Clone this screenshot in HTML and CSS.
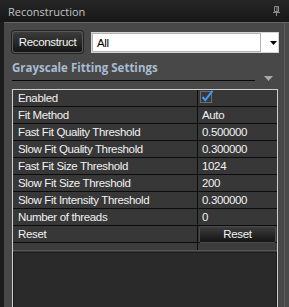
FILE: index.html
```html
<!DOCTYPE html>
<html lang="en">
<head>
  <meta charset="UTF-8" />
  <title>Reconstruction</title>
  <link rel="stylesheet" href="styles.css">
</head>
<body>
  <div class="panel">
    <div class="titlebar">
      <span class="title">Reconstruction</span>
      <svg class="pin" width="7" height="10" viewBox="0 0 7 10">
        <path d="M1.5 0.5h4v5h-4z M4 1v4" fill="none" stroke="#8c8c8c" stroke-width="1"/>
        <path d="M0 6.5h7 M3.5 6.5v3.5" stroke="#8c8c8c" stroke-width="1"/>
      </svg>
    </div>

    <div class="body">
      <div class="toolbar">
        <button class="btn">Reconstruct</button>
        <div class="combo">
          <div class="combo-field">All</div>
          <svg class="combo-arrow" width="7" height="4" viewBox="0 0 7 4">
            <path d="M0 0h7L3.5 4z" fill="#000"/>
          </svg>
        </div>
      </div>

      <div class="group-head">
        <div class="group-title">Grayscale Fitting Settings</div>
        <svg class="group-arrow" width="9" height="5" viewBox="0 0 9 5">
          <path d="M0 0h9L4.5 5z" fill="#a8a8a8"/>
        </svg>
      </div>

      <div class="grid">
        <div class="row">
          <div class="name">Enabled</div>
          <div class="value">
            <svg class="check" width="14" height="14" viewBox="0 0 14 14">
              <rect x="0.5" y="1.5" width="11" height="11" fill="none" stroke="#6d6d6d"/>
              <path d="M2.5 7l2.8 3.2L12.5 0.8" fill="none" stroke="#3c9bff" stroke-width="2"/>
            </svg>
          </div>
        </div>
        <div class="row"><div class="name">Fit Method</div><div class="value">Auto</div></div>
        <div class="row"><div class="name">Fast Fit Quality Threshold</div><div class="value">0.500000</div></div>
        <div class="row"><div class="name">Slow Fit Quality Threshold</div><div class="value">0.300000</div></div>
        <div class="row"><div class="name">Fast Fit Size Threshold</div><div class="value">1024</div></div>
        <div class="row"><div class="name">Slow Fit Size Threshold</div><div class="value">200</div></div>
        <div class="row"><div class="name">Slow Fit Intensity Threshold</div><div class="value">0.300000</div></div>
        <div class="row"><div class="name">Number of threads</div><div class="value">0</div></div>
        <div class="row">
          <div class="name">Reset</div>
          <div class="value value-btn"><button class="btn btn-small">Reset</button></div>
        </div>
        <div class="row row-tail"><div class="name"></div><div class="value"></div></div>
        <div class="desc"></div>
      </div>
    </div>
  </div>
</body>
</html>
```

FILE: styles.css
```css
body {
  margin: 0;
  background-color: #1c1c1c;
  font-family: 'Liberation Sans', Arial, sans-serif;
  font-size: 11.5px;
  letter-spacing: -0.35px;
  color: #f2f2f2;
  overflow: hidden;
}

.panel {
  display: flex;
  flex-direction: column;
  height: 307px;
}

.titlebar {
  height: 22px;
  box-sizing: border-box;
  padding: 0 8px 0 8px;
  display: flex;
  align-items: center;
  justify-content: space-between;
  background: linear-gradient(#262626, #171717);
}

.title {
  font-family: 'Open Sans', sans-serif;
  font-size: 11px;
  color: #c4c4c4;
  letter-spacing: 0;
}

.pin { margin-right: 1px; }

.body {
  flex: 1;
  margin-left: 4px;
  border-top: 1px solid #666;
  background-color: #484848;
  padding: 8px 10px 0 8px;
  display: flex;
  flex-direction: column;
  min-height: 0;
  box-shadow: inset -4px 0 0 #4a4a4a, inset -5px 0 0 #5c5c5c;
}

.toolbar {
  display: flex;
  gap: 8px;
  align-items: flex-start;
}

.btn {
  font-family: 'Liberation Sans', Arial, sans-serif;
  font-size: 11.5px;
  letter-spacing: -0.35px;
  color: #f4f4f4;
  background: linear-gradient(#3c3c3c, #141414);
  border: 1px solid #5a5a5a;
  border-radius: 3px;
  padding: 0;
  cursor: pointer;
}

.toolbar .btn {
  width: 71px;
  height: 22px;
  box-shadow: 0 0 0 1px #222;
}

.combo {
  flex: 1;
  height: 21px;
  margin-top: 1px;
  box-sizing: border-box;
  border: 1px solid #d4d4d4;
  background-color: #fff;
  display: flex;
  align-items: center;
}

.combo-field {
  width: 169px;
  height: 19px;
  box-sizing: border-box;
  border: 1px solid #b4b4b4;
  padding: 3px 0 0 4px;
  color: #000;
}

.combo-arrow { margin-left: 9px; }

.group-head {
  display: flex;
  align-items: flex-end;
  margin-top: 7px;
}

.group-title {
  width: 243px;
  line-height: 16px;
  padding-bottom: 4px;
  border-bottom: 1px solid #080808;
  font-family: 'Open Sans', sans-serif;
  font-weight: bold;
  font-size: 11.5px;
  letter-spacing: 0;
  color: #a8bcd2;
}

.group-arrow {
  margin-left: 9px;
  margin-bottom: 0;
}

.grid {
  flex: 1;
  margin: 8px 1px 0 0;
  border: 1px solid #cfcfcf;
  border-bottom: none;
  background-color: #3b3b3b;
  display: flex;
  flex-direction: column;
}

.row {
  display: grid;
  grid-template-columns: 185px 1fr;
  height: 17px;
  box-sizing: border-box;
  border-bottom: 1px solid #0c0c0c;
  background-color: #373737;
  line-height: 16px;
}

.name {
  padding-left: 5px;
  border-right: 1px solid #0c0c0c;
  white-space: nowrap;
}

.value {
  padding-left: 4px;
}

.check {
  display: block;
  margin: 0 0 0 -2px;
}

.value-btn {
  padding-left: 1px;
  padding-right: 1px;
}

.btn-small {
  display: block;
  width: 100%;
  height: 17px;
  border-radius: 2px;
  border-color: #4a4a4a;
  line-height: 15px;
}

.row-tail {
  height: 8px;
  background-color: #3c3c3c;
  border-bottom: 1px solid #545454;
}

.desc {
  flex: 1;
  margin-top: 1px;
  background-color: #2a2a2a;
  border: 1px solid #1c1c1c;
  border-bottom: none;
}
```
